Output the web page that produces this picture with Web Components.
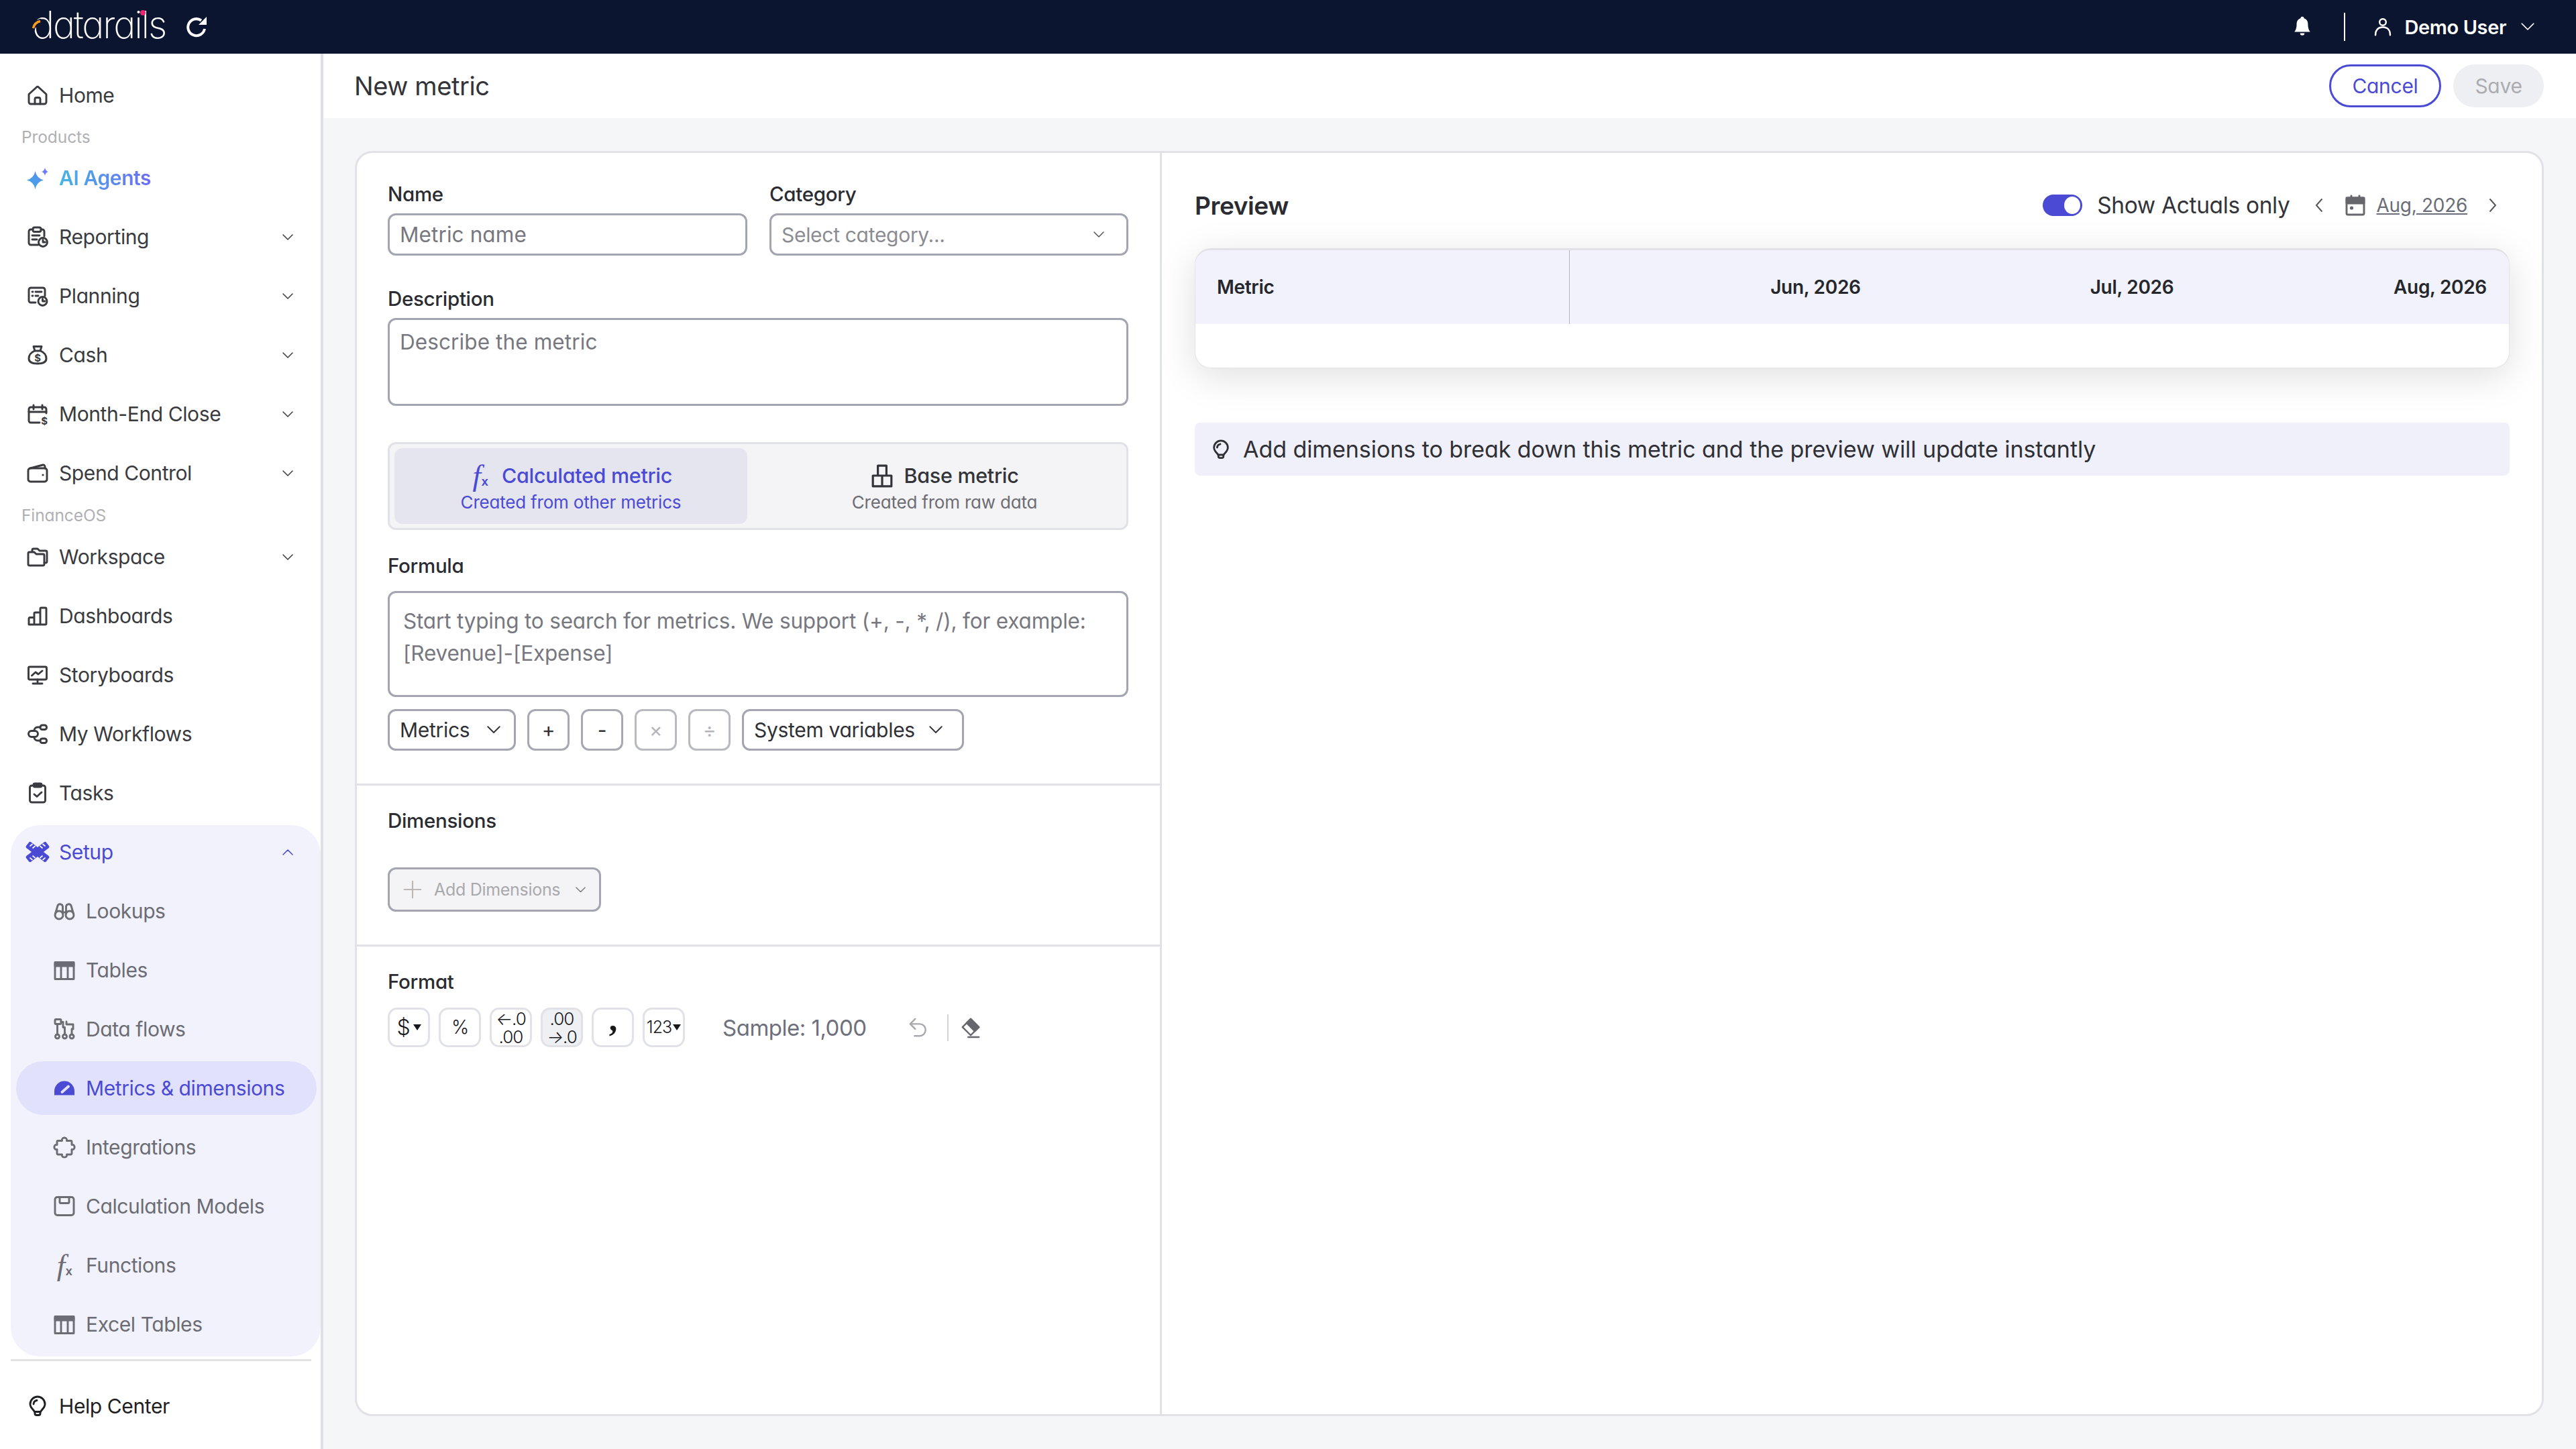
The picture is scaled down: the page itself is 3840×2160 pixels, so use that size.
<!DOCTYPE html>
<html>
<head>
<meta charset="utf-8">
<title>New metric</title>
<style>
  html, body { margin: 0; padding: 0; width: 3840px; height: 2160px; overflow: hidden; }
  body {
    font-family: Inter, "Noto Sans", sans-serif;
    font-feature-settings: "cv11" 1;
    color: #2f3036;
    display: grid;
    grid-template-columns: 482px 1fr;
    grid-template-rows: 80px 1fr;
    background: #f5f6f8;
  }
  dr-topbar { grid-column: 1 / 3; }
</style>
</head>
<body>
<dr-topbar></dr-topbar>

<dr-sidebar>
  <dr-nav icon="home" label="Home"></dr-nav>
  <dr-nav-heading>Products</dr-nav-heading>
  <dr-nav icon="spark" label="AI Agents" ai></dr-nav>
  <dr-nav icon="reporting" label="Reporting" chevron></dr-nav>
  <dr-nav icon="planning" label="Planning" chevron></dr-nav>
  <dr-nav icon="cash" label="Cash" chevron></dr-nav>
  <dr-nav icon="monthend" label="Month-End Close" chevron></dr-nav>
  <dr-nav icon="wallet" label="Spend Control" chevron></dr-nav>
  <dr-nav-heading low>FinanceOS</dr-nav-heading>
  <dr-nav icon="folder" label="Workspace" chevron></dr-nav>
  <dr-nav icon="bars" label="Dashboards"></dr-nav>
  <dr-nav icon="monitor" label="Storyboards"></dr-nav>
  <dr-nav icon="workflow" label="My Workflows"></dr-nav>
  <dr-nav icon="tasks" label="Tasks"></dr-nav>
  <dr-nav-group>
    <dr-nav slot="head" icon="setup" label="Setup" chevron="up" head></dr-nav>
    <dr-nav sub icon="binoculars" label="Lookups"></dr-nav>
    <dr-nav sub icon="table" label="Tables"></dr-nav>
    <dr-nav sub icon="dataflow" label="Data flows"></dr-nav>
    <dr-nav sub selected icon="gauge" label="Metrics &amp; dimensions"></dr-nav>
    <dr-nav sub icon="puzzle" label="Integrations"></dr-nav>
    <dr-nav sub icon="model" label="Calculation Models"></dr-nav>
    <dr-nav sub icon="fx" label="Functions"></dr-nav>
    <dr-nav sub icon="table" label="Excel Tables"></dr-nav>
  </dr-nav-group>
  <dr-nav slot="foot" icon="bulb" label="Help Center" help></dr-nav>
</dr-sidebar>

<dr-main>
  <dr-page-header slot="header" title="New metric"></dr-page-header>
  <dr-metric-form slot="form"></dr-metric-form>
  <dr-preview slot="preview"></dr-preview>
</dr-main>

<script>
// icon drawings, all on a 32 box, stroked with currentColor unless filled
const ICONS = {
  home: '<path d="M3 14.5 14.2 4.2a2.6 2.6 0 0 1 3.6 0L29 14.5V26a3 3 0 0 1-3 3H6a3 3 0 0 1-3-3z"/><path d="M12 29v-7a2.500 2.500 0 0 1 2.500-2.500h3A2.500 2.500 0 0 1 20 22v7"/>',
  spark: '<path fill="url(#sg)" stroke="none" d="M12.500 6Q14.500 16.500 25 19.500 14.500 22 12.500 33 10.500 22 0 19.500 10.500 16.500 12.500 6z"/><path fill="#6d7cf6" stroke="none" d="M27 1Q28 6 32 7 28 8 27 13 26 8 22 7 26 6 27 1z"/><defs><linearGradient id="sg" x1="0" y1="1" x2="1" y2="0"><stop offset="0" stop-color="#3fa9e6"/><stop offset="1" stop-color="#5a8cf0"/></linearGradient></defs>',
  reporting: '<path d="M21 5h2a3 3 0 0 1 3 3v7M9 5H6a3 3 0 0 0-3 3v17a3 3 0 0 0 3 3h11"/><rect x="9" y="2" width="12" height="6.500" rx="2.500"/><path d="M8 14h11M8 20h7"/><circle cx="24" cy="24" r="6.500"/><path d="M24 20.500V24h3.500"/>',
  planning: '<path d="M13 26H6a3 3 0 0 1-3-3V7a3 3 0 0 1 3-3h18a3 3 0 0 1 3 3v9"/><path d="M8 10h1M8 16h1M13 10h9M13 16h4"/><circle cx="23.500" cy="24" r="6.500"/><path d="M23.500 20.500V24H27"/>',
  cash: '<path d="M11.500 10C6 12.500 3 17 3 21.500 3 26.500 8 29 16 29s13-2.500 13-7.500c0-4.500-3-9-8.500-11.500"/><path d="M10 3.500h12l-2 6.500h-8z"/><text x="16" y="26" text-anchor="middle" font-size="15" font-weight="700" fill="currentColor" stroke="none">$</text>',
  monthend: '<path d="M29 15V9a3 3 0 0 0-3-3H6a3 3 0 0 0-3 3v17a3 3 0 0 0 3 3h13"/><path d="M3 13h26M10 3v6M23 3v6"/><text x="26" y="32" text-anchor="middle" font-size="15" font-weight="700" fill="currentColor" stroke="none">$</text>',
  wallet: '<rect x="2" y="9" width="28" height="20" rx="3.500"/><path d="M5 9 24 4a2.500 2.500 0 0 1 3 2.500V9"/><circle cx="24" cy="19" r="1.600" fill="currentColor" stroke="none"/>',
  folder: '<path d="M8 8V6a2 2 0 0 1 2-2h6l3 3h9a2 2 0 0 1 2 2v14a2 2 0 0 1-2 2h-2"/><path d="M2 11a2 2 0 0 1 2-2h7l3 3h10a2 2 0 0 1 2 2v13a2 2 0 0 1-2 2H4a2 2 0 0 1-2-2z"/>',
  bars: '<path d="M3 29V20a1.500 1.500 0 0 1 1.500-1.500H11V29zM11 29V12.500a1.500 1.500 0 0 1 1.500-1.500H20v18zM20 29V5.500A1.500 1.500 0 0 1 21.500 4h6A1.500 1.500 0 0 1 29 5.500V27.500a1.500 1.500 0 0 1-1.500 1.500z"/>',
  monitor: '<rect x="2.500" y="4" width="27" height="19" rx="2"/><path d="M7.500 17 13 12l4 3 6-5M16 23v5M9 29h14"/>',
  workflow: '<rect x="2.500" y="11.500" width="14" height="9" rx="4.500"/><rect x="20" y="3" width="9.500" height="6.500" rx="3"/><rect x="20" y="23" width="9.500" height="6.500" rx="3"/><path d="M20 6h-4a5 5 0 0 0-5 5.500M20 26h-4a5 5 0 0 1-5-5.500"/>',
  tasks: '<rect x="4.500" y="5" width="23" height="25" rx="3"/><rect x="10" y="2" width="12" height="5" rx="2" fill="currentColor"/><path d="M11 18l4 3.500 7-6.500"/>',
  bulb: '<path d="M11.500 24.500C10.500 21.500 5 19 5 13A11 11 0 0 1 27 13c0 6-5.500 8.500-6.500 11.500z"/><path d="M12 24.500V27a2.500 2.500 0 0 0 2.500 2.500h3A2.500 2.500 0 0 0 20 27v-2.500M10 13a6 6 0 0 1 5-5.500"/>',
  setup: '<g stroke="none" fill="currentColor"><rect x="-3" y="10.500" width="38" height="11" rx="2.500" transform="rotate(38 16 16)"/><rect x="-3" y="10.500" width="38" height="11" rx="2.500" transform="rotate(-38 16 16)"/></g><g stroke="#f1f2fb" stroke-width="1.800"><path d="M5 7l3-2.500M9 10l3-2.500M27 7l-3-2.500M23 10l-3-2.500M5 25l3 2.500M9 22l3 2.500M27 25l-3 2.500M23 22l-3 2.500"/></g>',
  binoculars: '<circle cx="8" cy="22" r="6"/><circle cx="24" cy="22" r="6"/><path d="M2.500 20 6 8a4 4 0 0 1 7.500 1v11M29.500 20 26 8a4 4 0 0 0-7.500 1v11M13.500 18h5"/>',
  table: '<path d="M2 4.500h28v25H2z"/><path d="M2 6h28v4H2z" fill="currentColor"/><path d="M11 10v19M21 10v19"/>',
  dataflow: '<rect x="2" y="1.500" width="9" height="7" rx="1.500"/><circle cx="5.500" cy="27" r="3"/><circle cx="16.500" cy="27" r="3"/><circle cx="27" cy="27" r="3"/><path d="M5.500 8.500V24M11 5.500h3v8h2.500V24M20 9h9v7h-2v8M19 5v4"/>',
  gauge: '<path fill="currentColor" stroke="none" d="M1 26.500v-6a15 15 0 0 1 30 0v6z"/><path d="M12.500 22 22 13.500" stroke="#e1e1fb" stroke-width="4"/>',
  puzzle: '<path d="M12.500 6.500C11 .5 21 .5 19.500 6.500H25.500a1.500 1.500 0 0 1 1.500 1.500V12.500C32.500 11 32.500 21 27 19.500V25a2 2 0 0 1-2 2H19.500C21 32.500 11 32.500 12.500 27H7a2 2 0 0 1-2-2V19.500C-.5 21-.5 11 5 12.500V8a1.500 1.500 0 0 1 1.500-1.500z"/>',
  model: '<rect x="2" y="2.500" width="28" height="27" rx="3.500"/><path d="M9 2.500v8a1 1 0 0 0 1 1h12a1 1 0 0 0 1-1v-8"/>',
  base: '<path d="M10 2h12v14H10zM3 16h26v15H3zM16 16v15"/>',
  bell: '<path fill="currentColor" stroke="none" d="M13.300 2.500a2.700 2.700 0 0 1 5.400 0c5 1.500 6.300 5.500 6.300 10 0 4 .8 8 3.500 11.500H3.500C6.200 20.500 7 16.500 7 12.500c0-4.500 1.300-8.500 6.300-10zM12.500 26h7a3.500 3.500 0 0 1-7 0z"/>',
  user: '<circle cx="16" cy="8" r="5.500"/><path d="M3.500 30c0-9 5-13.500 12.500-13.500S28.500 21 28.500 30"/>',
  calendar: '<rect x="3" y="5" width="26" height="25" rx="2"/><path d="M3 5h26v8H3z" fill="currentColor"/><path d="M10 2v4M22 2v4"/><circle cx="10.500" cy="20" r="2.600" fill="currentColor" stroke="none"/>',
  undo: '<path d="M12 2 4 10l8 8M4 10h15a8.500 8.500 0 0 1 0 19H11"/>',
  eraser: '<path d="M16 2 29 15 16 28 3 15z" fill="none"/><path d="M9.500 8.500 16 2l13 13-6.500 6.500z" fill="currentColor"/><path d="M12 31h17"/>',
  plus: '<path d="M16 2v28M2 16h28"/>'
};

class DrIcon extends HTMLElement {
  connectedCallback() {
    const size = this.getAttribute('size') || 32;
    const name = this.getAttribute('name');
    const sw = this.getAttribute('sw') || 2.9;
    this.attachShadow({ mode: 'open' });
    const body = name === 'fx'
      ? `<span class="fx">f<small>x</small></span>`
      : `<svg width="${size}" height="${size}" viewBox="0 0 32 32" fill="none" stroke="currentColor" stroke-width="${sw}" stroke-linecap="round" stroke-linejoin="round">${ICONS[name] || ''}</svg>`;
    this.shadowRoot.innerHTML = `<style>
      :host { display: inline-flex; width: ${size}px; height: ${size}px; flex: none; align-items: center; justify-content: center; }
      svg { display: block; overflow: visible; }
      text { font-family: Inter, sans-serif; }
      .fx { font: italic ${size * 1.4}px "Liberation Serif", serif; line-height: 1; white-space: nowrap; }
      .fx small { font: 700 ${size * 0.56}px "Liberation Sans", sans-serif; margin-left: 1px; }
    </style>${body}`;
  }
}
customElements.define('dr-icon', DrIcon);

class DrChevron extends HTMLElement {
  connectedCallback() {
    const w = this.getAttribute('w') || 16;
    const dir = this.getAttribute('dir') || 'down';
    const d = { down: 'M1 1l7 7 7-7', up: 'M1 8l7-7 7 7' }[dir];
    this.attachShadow({ mode: 'open' });
    this.shadowRoot.innerHTML = `<style>:host{display:inline-flex;flex:none}svg{display:block}</style>
      <svg width="${w}" height="${w * 9 / 16}" viewBox="0 0 16 9" fill="none" stroke="currentColor" stroke-width="${this.getAttribute('sw') || 1.500}" stroke-linecap="round" stroke-linejoin="round"><path d="${d}"/></svg>`;
  }
}
customElements.define('dr-chevron', DrChevron);

class DrTopbar extends HTMLElement {
  constructor() {
    super();
    this.attachShadow({ mode: 'open' });
    this.shadowRoot.innerHTML = `<style>
      :host { display: flex; align-items: center; height: 80px; background: #0c1530; color: #fff; padding: 0 62px 0 48px; box-sizing: border-box; }
      .logo { position: relative; font-size: 56px; font-weight: 200; letter-spacing: -2.200px; line-height: 80px; height: 80px; width: 229px; margin-top: -6px; }
      .arc { position: absolute; left: 0; top: 31px; }
      .dot { position: absolute; left: 161px; top: 18px; width: 8px; height: 8px; border-radius: 50%; background: #e8256f; }
      .spacer { flex: 1; }
      .sep { width: 2px; height: 42px; background: #fff; margin: 0 42px 0 47px; }
      .user { font-size: 29px; font-weight: 600; margin: 0 22px 0 19px; letter-spacing: -.4px; }
    </style>
    <div class="logo">datarails<svg class="arc" width="20" height="20" viewBox="0 0 20 20" fill="none"><path d="M0 18A17 17 0 0 1 14 3" stroke="#0c1530" stroke-width="7"/><path d="M1.500 14A14 14 0 0 1 12 3.500" stroke="#f39c1f" stroke-width="3.500"/></svg><span class="dot"></span></div>
    <svg width="32" height="32" viewBox="0 0 32 32" fill="none" stroke="#fff" stroke-width="4"><path d="M28 19A12.500 12.500 0 1 1 23 6.500"/><path d="M31 1V13H19z" fill="#fff" stroke="none"/></svg>
    <div class="spacer"></div>
    <dr-icon name="bell" size="30" style="color:#fff"></dr-icon>
    <div class="sep"></div>
    <dr-icon name="user" size="28" sw="2.800"></dr-icon>
    <div class="user">Demo User</div>
    <dr-chevron w="20" sw="1.400"></dr-chevron>`;
  }
}
customElements.define('dr-topbar', DrTopbar);

class DrSidebar extends HTMLElement {
  constructor() {
    super();
    this.attachShadow({ mode: 'open' });
    this.shadowRoot.innerHTML = `<style>
      :host { display: flex; flex-direction: column; box-sizing: border-box; width: 482px; height: 2080px; background: #fff; border-right: 4px solid #dfe0e6; padding-top: 18px; }
      .rule { height: 3px; background: #e2e2e4; margin: 4px 14px 0 16px; }
      .foot { margin-top: 23px; }
    </style>
    <slot></slot>
    <div class="rule"></div>
    <div class="foot"><slot name="foot"></slot></div>`;
  }
}
customElements.define('dr-sidebar', DrSidebar);

class DrNavHeading extends HTMLElement {
  constructor() {
    super();
    this.attachShadow({ mode: 'open' });
    this.shadowRoot.innerHTML = `<style>
      :host { display: flex; align-items: center; height: 35px; padding-left: 32px; font-size: 24.500px; color: #b0b0b4; letter-spacing: -.1px; }
      :host([low]) { height: 37px; }
    </style><slot></slot>`;
  }
}
customElements.define('dr-nav-heading', DrNavHeading);

class DrNav extends HTMLElement {
  connectedCallback() {
    const label = this.getAttribute('label');
    const icon = this.getAttribute('icon');
    const chev = this.getAttribute('chevron');
    this.attachShadow({ mode: 'open' });
    this.shadowRoot.innerHTML = `<style>
      :host { display: flex; align-items: center; box-sizing: border-box; height: 88px; padding: 0 41px 0 40px; font-size: 30px; color: #3a3b40; letter-spacing: -.4px; white-space: nowrap; }
      dr-icon { margin-right: 16px; }
      dr-chevron { margin-left: auto; }
      :host([ai]) .label { font-weight: 600; background: linear-gradient(90deg, #46b4e4, #6c6cf6); -webkit-background-clip: text; background-clip: text; color: transparent; }
      :host([head]) { height: 80px; margin-bottom: 8px; padding: 0 41px 0 24px; color: #4a4ad4; }
      :host([sub]) { height: 80px; margin: 8px 6px 8px 8px; padding-left: 56px; color: #6b6c74; }
      :host([selected]) { background: #e1e1fb; border-radius: 40px; color: #4a4ad4; }
      :host([help]) { color: #1f2024; }
    </style>
    <dr-icon name="${icon}"></dr-icon><span class="label">${label.replace('&', '&amp;')}</span>
    ${chev !== null ? `<dr-chevron dir="${chev === 'up' ? 'up' : 'down'}"></dr-chevron>` : ''}`;
  }
}
customElements.define('dr-nav', DrNav);

class DrNavGroup extends HTMLElement {
  constructor() {
    super();
    this.attachShadow({ mode: 'open' });
    this.shadowRoot.innerHTML = `<style>
      :host { display: block; margin: 4px 0 0 16px; width: 462px; height: 792px; flex: none; box-sizing: border-box; background: #f1f2fb; border-radius: 44px; }
    </style><slot name="head"></slot><slot></slot>`;
  }
}
customElements.define('dr-nav-group', DrNavGroup);

class DrMain extends HTMLElement {
  constructor() {
    super();
    this.attachShadow({ mode: 'open' });
    this.shadowRoot.innerHTML = `<style>
      :host { display: flex; flex-direction: column; height: 2080px; min-width: 0; }
      .content { flex: 1; display: flex; padding: 49px 48px 49px 47px; min-height: 0; }
      .card { flex: 1; display: grid; grid-template-columns: 1200px 1fr; background: #fff; border: 3px solid #e1e2e7; border-radius: 26px; min-height: 0; }
    </style>
    <slot name="header"></slot>
    <div class="content"><div class="card"><slot name="form"></slot><slot name="preview"></slot></div></div>`;
  }
}
customElements.define('dr-main', DrMain);

class DrPageHeader extends HTMLElement {
  connectedCallback() {
    this.attachShadow({ mode: 'open' });
    this.shadowRoot.innerHTML = `<style>
      :host { display: flex; align-items: center; height: 96px; background: #fff; padding: 0 48px 0 46px; }
      h1 { margin: 0; font-size: 38px; font-weight: 400; color: #33343a; letter-spacing: -.4px; flex: 1; }
      button { font: inherit; font-size: 30px; height: 64px; border-radius: 32px; box-sizing: border-box; letter-spacing: -.3px; padding: 0; }
      .cancel { width: 167px; background: #fff; color: #4a4ad4; border: 3px solid #4a4ad4; margin-right: 18px; }
      .save { width: 135px; background: #eeeff3; color: #abacb0; border: 0; }
    </style>
    <h1>${this.getAttribute('title')}</h1>
    <button class="cancel">Cancel</button><button class="save">Save</button>`;
  }
}
customElements.define('dr-page-header', DrPageHeader);

// the small bordered box used for inputs, textareas and toolbar buttons
class DrBox extends HTMLElement {
  constructor() {
    super();
    this.attachShadow({ mode: 'open' });
    this.shadowRoot.innerHTML = `<style>
      :host { display: flex; align-items: center; box-sizing: border-box; height: 63px; padding: 0 15px; border: 3px solid #a3a5b0; border-radius: 12px; background: #fff; font-size: 30px; color: #77787f; letter-spacing: -.3px; white-space: nowrap; }
      :host([tool]) { justify-content: space-between; color: #2f3036; height: 62px; }
      :host([op]) { width: 63px; padding: 0; justify-content: center; color: #2f3036; height: 62px; border-color: #a8a9b3; }
      :host([off]) { color: #b4b5ba; border-color: #b9bac1; }
    </style><slot></slot>`;
  }
}
customElements.define('dr-box', DrBox);

class DrFormat extends HTMLElement {
  constructor() {
    super();
    this.attachShadow({ mode: 'open' });
    this.shadowRoot.innerHTML = `<style>
      :host { display: inline-flex; flex-direction: column; align-items: center; justify-content: center; box-sizing: border-box; width: 63px; height: 59px; border: 3px solid #e1e2e7; border-radius: 14px; background: #fff; font-size: 28px; line-height: 27px; font-weight: 300; color: #17181c; white-space: nowrap; letter-spacing: -1px; }
      :host([on]) { background: #eff0f4; }
      :host([small]) { font-size: 26px; }
      ::slotted(i) { font-style: normal; color: #4a4ad4; }
    </style><slot></slot>`;
  }
}
customElements.define('dr-format', DrFormat);

class DrMetricForm extends HTMLElement {
  constructor() {
    super();
    this.attachShadow({ mode: 'open' });
    this.shadowRoot.innerHTML = `<style>
      :host { display: block; border-right: 3px solid #e1e2e7; font-size: 30px; }
      section { padding: 0 47px 0 46px; }
      section + section { border-top: 3px solid #e1e2e7; }
      .label { height: 40px; line-height: 40px; color: #2b2c32; letter-spacing: -.3px; font-weight: 500; font-size: 29.500px; }
      .grid { display: grid; grid-template-columns: 536px 535px; column-gap: 33px; }
      .grid .label { margin-bottom: 9px; }
      .s1 { padding-top: 41px; box-sizing: border-box; height: 940px; }
      .big { font-size: 31.500px; letter-spacing: .1px; }
      .ta { height: 131px; margin-top: 9px; align-items: flex-start; padding-top: 15px; line-height: 36px; }
      .seg { display: grid; grid-template-columns: 526px 1fr; height: 131px; margin-top: 54px; box-sizing: border-box; border: 3px solid #e1e2e7; border-radius: 12px; background: #f4f4f6; padding: 6px 7px; color: #33343a; }
      .seg > div { display: flex; flex-direction: column; align-items: center; border-radius: 12px; padding-top: 20px; box-sizing: border-box; }
      .seg > div:last-child { padding-left: 30px; }
      .seg .on { background: #e5e5f0; color: #4a4ad4; }
      .seg b { display: flex; align-items: center; gap: 16px; font-weight: 500; font-size: 30.500px; line-height: 42px; letter-spacing: -.3px; }
      .seg span { font-size: 26px; line-height: 38px; letter-spacing: -.2px; color: #6b6c74; }
      .seg .on span { color: #4a4ad4; }
      .fl { margin-top: 33px; }
      .formula { height: 158px; margin-top: 18px; align-items: flex-start; padding: 18px 20px 0; white-space: normal; line-height: 47.500px; font-size: 31.500px; letter-spacing: -.18px; }
      .tools { display: flex; gap: 17px; margin-top: 18px; }
      .s2 { height: 240px; box-sizing: border-box; padding-top: 32px; }
      .add { width: 318px; height: 66px; margin-top: 50px; background: #f4f4f6; color: #a9a9ad; font-size: 25px; padding: 0 20px; justify-content: flex-start; }
      .add dr-icon { margin-right: 18px; color: #bcb7b4; }
      .add dr-chevron { margin-left: auto; color: #77787f; }
      .s3 { padding-top: 32px; }
      .fmt { display: flex; align-items: center; gap: 13px; margin-top: 19px; height: 59px; }
      .sample { font-size: 33px; color: #6d6f7b; margin-left: 43px; margin-right: 48px; letter-spacing: -.5px; white-space: nowrap; }
      .bar { width: 2px; height: 40px; background: #d3d4da; margin: 0 5px 0 16px; }
      .tri { display: inline-block; width: 0; height: 0; border: 6px solid transparent; border-top: 9px solid #17181c; border-bottom: 0; margin-left: 5px; vertical-align: 4px; }
      .rows { display: flex; align-items: center; }
    </style>
    <section class="s1">
      <div class="grid">
        <div><div class="label">Name</div><dr-box class="big">Metric name</dr-box></div>
        <div><div class="label">Category</div><dr-box style="justify-content:space-between;padding-right:33px;color:#8b8c92">Select category...<dr-chevron style="color:#55565c"></dr-chevron></dr-box></div>
      </div>
      <div class="label" style="margin-top:44px">Description</div>
      <dr-box class="ta big">Describe the metric</dr-box>
      <div class="seg">
        <div class="on"><b><dr-icon name="fx" size="32"></dr-icon>Calculated metric</b><span>Created from other metrics</span></div>
        <div><b><dr-icon name="base" size="34" sw="3"></dr-icon>Base metric</b><span>Created from raw data</span></div>
      </div>
      <div class="label fl">Formula</div>
      <dr-box class="formula">Start typing to search for metrics. We support (+, -, *, /), for example: [Revenue]-[Expense]</dr-box>
      <div class="tools">
        <dr-box tool style="width:191px">Metrics<dr-chevron w="20" style="color:#33343a;margin-left:16px;margin-right:5px"></dr-chevron></dr-box>
        <dr-box op>+</dr-box><dr-box op>-</dr-box><dr-box op off>×</dr-box><dr-box op off>÷</dr-box>
        <dr-box tool style="width:331px">System variables<dr-chevron w="20" style="color:#33343a;margin-left:16px;margin-right:14px"></dr-chevron></dr-box>
      </div>
    </section>
    <section class="s2">
      <div class="label">Dimensions</div>
      <dr-box class="add"><dr-icon name="plus" size="28" sw="2.400"></dr-icon>Add Dimensions<dr-chevron w="15"></dr-chevron></dr-box>
    </section>
    <section class="s3">
      <div class="label">Format</div>
      <div class="fmt">
        <dr-format style="font-size:32px"><div class="rows">$<span class="tri"></span></div></dr-format>
        <dr-format>%</dr-format>
        <dr-format small><div><i>←</i>.0</div><div>.00</div></dr-format>
        <dr-format small on><div>.00</div><div><i>→</i>.0</div></dr-format>
        <dr-format style="font:700 50px/1 'Liberation Serif',serif"><div style="margin-top:-26px">,</div></dr-format>
        <dr-format small style="font-size:25px"><div class="rows">123<span class="tri" style="margin-left:2px"></span></div></dr-format>
        <div class="sample">Sample: 1,000</div>
        <dr-icon name="undo" size="30" sw="2.600" style="color:#a9a9ad"></dr-icon>
        <div class="bar"></div>
        <dr-icon name="eraser" size="30" sw="2.600" style="color:#66676d"></dr-icon>
      </div>
    </section>`;
  }
}
customElements.define('dr-metric-form', DrMetricForm);

class DrPreview extends HTMLElement {
  constructor() {
    super();
    this.attachShadow({ mode: 'open' });
    this.shadowRoot.innerHTML = `<style>
      :host { display: block; padding: 56px 48px 0 49px; min-width: 0; }
      .top { display: flex; align-items: center; height: 44px; }
      h2 { flex: 1; margin: 0; font-size: 37px; font-weight: 600; color: #2b2c32; letter-spacing: -.4px; }
      .toggle { position: relative; width: 59px; height: 32px; border-radius: 16px; background: #4a4ad4; margin-right: 22px; }
      .toggle::after { content: ""; position: absolute; right: 3px; top: 3px; width: 24px; height: 26px; border-radius: 50%; background: #fff; }
      .show { font-size: 33.500px; letter-spacing: -.35px; color: #33343a; margin-right: 37px; white-space: nowrap; }
      .date { font-size: 28px; color: #6b6d78; text-decoration: underline; letter-spacing: -.3px; margin: 0 32px 0 16px; }
      .nav { color: #55565c; }
      .table { margin-top: 42px; height: 179px; box-sizing: border-box; border: 1px solid #e4e4e8; border-top: 3px solid #e1e2e7; border-radius: 24px; overflow: hidden; background: #fff; box-shadow: 0 12px 56px rgba(0,0,0,.13); }
      .row { display: grid; grid-template-columns: 558px repeat(3, 1fr); height: 110px; background: #f1f2fb; font-size: 28px; font-weight: 600; color: #26272c; letter-spacing: -.3px; }
      .row div { display: flex; align-items: center; justify-content: flex-end; padding-right: 33px; }
      .row div:first-child { justify-content: flex-start; padding-left: 32px; border-right: 1px solid #b4b5c0; }
      .info { display: flex; align-items: center; height: 79px; margin-top: 81px; padding-left: 24px; background: #f0f0fa; border-radius: 8px; font-size: 34px; letter-spacing: -.06px; color: #2f3036; white-space: nowrap; }
      .info dr-icon { margin-right: 18px; }
    </style>
    <div class="top">
      <h2>Preview</h2>
      <div class="toggle"></div>
      <div class="show">Show Actuals only</div>
      <svg class="nav" width="12" height="22" viewBox="0 0 12 22" fill="none" stroke="currentColor" stroke-width="2"><path d="M10.500 1.500 2 11l8.500 9.500"/></svg>
      <dr-icon name="calendar" size="32" style="color:#66676d;margin-left:32px"></dr-icon>
      <div class="date">Aug, 2026</div>
      <svg class="nav" width="12" height="22" viewBox="0 0 12 22" fill="none" stroke="currentColor" stroke-width="2"><path d="M1.500 1.500 10 11l-8.500 9.500"/></svg>
      <div style="width:19px"></div>
    </div>
    <div class="table">
      <div class="row"><div>Metric</div><div>Jun, 2026</div><div>Jul, 2026</div><div>Aug, 2026</div></div>
    </div>
    <div class="info"><dr-icon name="bulb" size="30" sw="3"></dr-icon>Add dimensions to break down this metric and the preview will update instantly</div>`;
  }
}
customElements.define('dr-preview', DrPreview);
</script>
</body>
</html>
